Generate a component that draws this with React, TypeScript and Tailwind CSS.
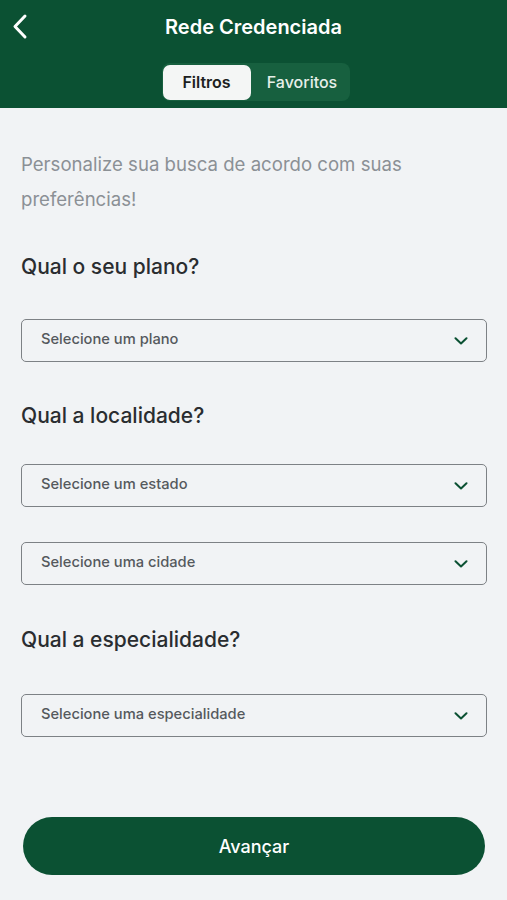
import React from "react";

const font = { fontFamily: 'Inter, "Noto Sans", sans-serif' };

function Select({ label }: { label: string }) {
  return (
    <div className="flex h-[43px] items-center justify-between rounded-[5px] border-[1.5px] border-[#7d8185] bg-[#f1f3f5] pb-[2px] pl-[19px] pr-[18px]">
      <span className="text-[14.7px] font-medium text-[#55595d]">{label}</span>
      <svg width="14" height="8" viewBox="0 0 14 8" fill="none" className="mt-[2px]">
        <path d="M1.5 1.2 L7 6.5 L12.5 1.2" stroke="#0b5133" strokeWidth="2" strokeLinecap="round" strokeLinejoin="round" />
      </svg>
    </div>
  );
}

export default function App() {
  return (
    <div className="flex h-[900px] w-[507px] flex-col bg-[#f1f3f5]" style={font}>
      <header className="relative flex h-[108px] flex-col items-center bg-[#0b5133]">
        <button className="absolute left-[11px] top-[13px] p-0">
          <svg width="20" height="28" viewBox="0 0 20 28" fill="none">
            <path d="M14 3 L4 13.5 L14 24" stroke="white" strokeWidth="3" strokeLinecap="round" strokeLinejoin="round" />
          </svg>
        </button>
        <h1 className="mt-[14px] text-[20px] font-semibold leading-[26px] text-white">Rede Credenciada</h1>
        <div className="ml-[4px] mt-[23px] flex h-[38px] items-center rounded-[8px] bg-[#17603f] p-[1px]">
          <div className="flex h-[35px] w-[88px] items-center justify-center rounded-[7px] bg-[#f4f6f5] text-[16px] font-semibold text-[#1c1f21]">
            Filtros
          </div>
          <div className="flex h-[35px] w-[98px] items-center justify-center pl-[5px] text-[16px] font-medium text-[#e6efe9]">
            Favoritos
          </div>
        </div>
      </header>
      <main className="flex flex-1 flex-col pl-[21px] pr-[20px]">
        <p className="mt-[39px] text-[18.6px] leading-[35px] text-[#8b9095]">
          Personalize sua busca de acordo com suas preferências!
        </p>
        <h2 className="mt-[36px] text-[21px] font-[450] leading-[28px] text-[#2a2d30]">Qual o seu plano?</h2>
        <div className="mt-[38px]">
          <Select label="Selecione um plano" />
        </div>
        <h2 className="mt-[40px] text-[21px] font-[450] leading-[28px] text-[#2a2d30]">Qual a localidade?</h2>
        <div className="mt-[34px]">
          <Select label="Selecione um estado" />
        </div>
        <div className="mt-[35px]">
          <Select label="Selecione uma cidade" />
        </div>
        <h2 className="mt-[41px] text-[21px] font-[450] leading-[28px] text-[#2a2d30]">Qual a especialidade?</h2>
        <div className="mt-[40px]">
          <Select label="Selecione uma especialidade" />
        </div>
        <button className="mx-[2px] mt-[80px] flex h-[58px] items-center justify-center rounded-full bg-[#0b5133] text-[18px] font-medium text-white">
          Avançar
        </button>
      </main>
    </div>
  );
}
